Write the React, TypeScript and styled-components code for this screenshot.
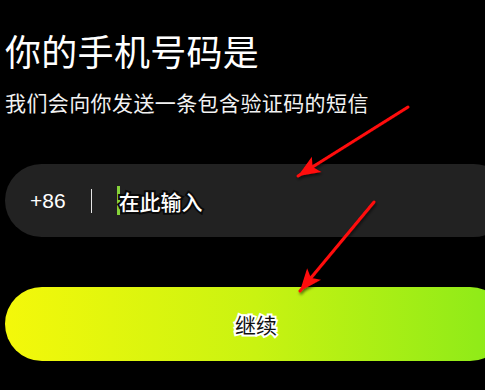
import React from 'react';
import styled, { createGlobalStyle } from 'styled-components';

const GlobalStyle = createGlobalStyle`
  html, body {
    margin: 0;
    padding: 0;
    background: #000;
    overflow: hidden;
  }
  body {
    font-family: "Noto Sans CJK SC", "Noto Sans", sans-serif;
    color: #fff;
  }
`;

const Arrow: React.FC<{ x1: number; y1: number; x2: number; y2: number }> = ({ x1, y1, x2, y2 }) => (
  <line x1={x1} y1={y1} x2={x2} y2={y2} stroke="#ff0a0a" strokeWidth={3} strokeLinecap="round" markerEnd="url(#head)" filter="url(#shade)" />
);

const App: React.FC = () => {
  return (
    <Page>
      <GlobalStyle />
      <Title>你的手机号码是</Title>
      <Subtitle>我们会向你发送一条包含验证码的短信</Subtitle>
      <PhoneField>
        <Prefix>+86</Prefix>
        <Divider />
        <Cursor />
        <Placeholder>在此输入</Placeholder>
      </PhoneField>
      <ContinueButton>
        <ButtonLabel>继续</ButtonLabel>
      </ContinueButton>
      <Overlay width="485" height="390" viewBox="0 0 485 390">
        <defs>
          <marker id="head" markerUnits="userSpaceOnUse" markerWidth="30" markerHeight="24" refX="24" refY="12" orient="auto">
            <path d="M24,12 L2,3 L7,12 L2,21 Z" fill="#ff0a0a" />
          </marker>
          <filter id="shade" x="-20%" y="-20%" width="140%" height="140%">
            <feDropShadow dx="1" dy="2" stdDeviation="1.5" floodColor="#000" floodOpacity="0.6" />
          </filter>
        </defs>
        <Arrow x1={408} y1={107} x2={298} y2={176} />
        <Arrow x1={374} y1={202} x2={300} y2={291} />
      </Overlay>
    </Page>
  );
};

export default App;

const Page = styled.div`
  position: relative;
  width: 485px;
  height: 390px;
  padding: 28px 0 0 5px;
  box-sizing: border-box;
  overflow: hidden;
`;

const Title = styled.h1`
  margin: 0;
  font-size: 36px;
  font-weight: 400;
  line-height: 44px;
  letter-spacing: 0.3px;
`;

const Subtitle = styled.p`
  margin: 17px 0 0;
  font-size: 21px;
  line-height: 26px;
  letter-spacing: 0.4px;
  color: #f2f2f2;
`;

const PhoneField = styled.div`
  margin-top: 49px;
  width: 505px;
  height: 73px;
  border-radius: 37px;
  background: #222222;
  display: flex;
  align-items: center;
  padding-left: 25px;
  box-sizing: border-box;
`;

const Prefix = styled.span`
  font-family: "Liberation Sans", "Noto Sans", sans-serif;
  font-size: 21px;
  color: #fff;
`;

const Divider = styled.span`
  width: 1px;
  height: 24px;
  background: #e6e6e6;
  margin-left: 25px;
`;

const Cursor = styled.span`
  width: 3px;
  height: 29px;
  background: #86d33a;
  margin-left: 25px;
`;

const Placeholder = styled.span`
  font-size: 21px;
  font-weight: 500;
  color: #fff;
  margin-left: -1px;
  -webkit-text-stroke: 4px #0a0a0a;
  paint-order: stroke fill;
`;

const ContinueButton = styled.div`
  margin-top: 50px;
  width: 502px;
  height: 74px;
  border-radius: 37px;
  background: linear-gradient(90deg, #f4f80a 0%, #c9f311 50%, #8aea19 100%);
  display: flex;
  align-items: center;
  justify-content: center;
`;

const ButtonLabel = styled.span`
  font-size: 21px;
  color: #111;
  -webkit-text-stroke: 4px #fff;
  paint-order: stroke fill;
`;

const Overlay = styled.svg`
  position: absolute;
  left: 0;
  top: 0;
  pointer-events: none;
`;
